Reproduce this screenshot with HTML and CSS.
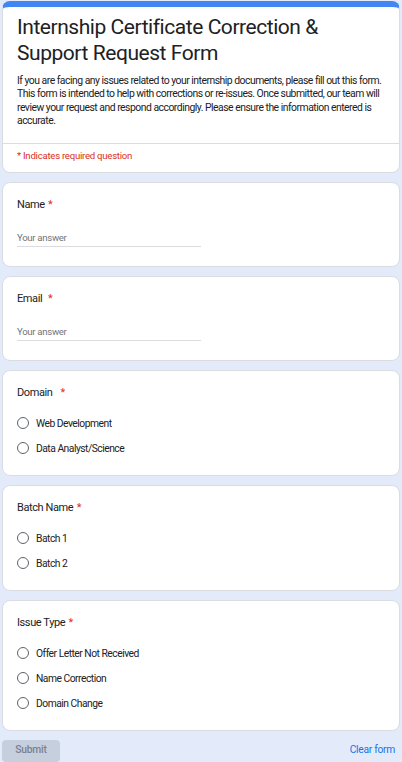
FILE: index.html
```html
<!DOCTYPE html>
<html>
<head>
<meta charset="utf-8">
<link rel="stylesheet" href="styles.css">
</head>
<body>
<div class="page">
  <div class="card header">
    <h1 class="title">Internship Certificate Correction &amp; Support Request Form</h1>
    <p class="desc">If you are facing any issues related to your internship documents, please fill out this form. This form is intended to help with corrections or re-issues. Once submitted, our team will review your request and respond accordingly. Please ensure the information entered is accurate.</p>
    <div class="req-row">* Indicates required question</div>
  </div>

  <div class="card q text-q">
    <div class="label">Name <span class="star">*</span></div>
    <div class="input">Your answer</div>
  </div>

  <div class="card q text-q">
    <div class="label">Email&nbsp; <span class="star">*</span></div>
    <div class="input">Your answer</div>
  </div>

  <div class="card q">
    <div class="label">Domain&nbsp;&nbsp; <span class="star">*</span></div>
    <div class="options">
      <div class="opt"><span class="radio"></span>Web Development</div>
      <div class="opt"><span class="radio"></span>Data Analyst/Science</div>
    </div>
  </div>

  <div class="card q">
    <div class="label">Batch Name <span class="star">*</span></div>
    <div class="options">
      <div class="opt"><span class="radio"></span>Batch 1</div>
      <div class="opt"><span class="radio"></span>Batch 2</div>
    </div>
  </div>

  <div class="card q">
    <div class="label">Issue Type <span class="star">*</span></div>
    <div class="options">
      <div class="opt"><span class="radio"></span>Offer Letter Not Received</div>
      <div class="opt"><span class="radio"></span>Name Correction</div>
      <div class="opt"><span class="radio"></span>Domain Change</div>
    </div>
  </div>

  <div class="actions">
    <div class="submit">Submit</div>
    <div class="clear">Clear form</div>
  </div>
</div>
</body>
</html>
```

FILE: styles.css
```css
html, body {
  margin: 0;
  padding: 0;
  background: #e3ebfa;
}
body {
  font-family: Roboto, "Liberation Sans", sans-serif;
  color: #202124;
}
.page {
  padding: 1px 2px 0 2px;
  display: flex;
  flex-direction: column;
  gap: 9px;
}
.card {
  background: #fff;
  border: 1px solid #dadce0;
  border-radius: 8px;
}
.header {
  border-top: 6px solid #4285f4;
  overflow: hidden;
}
.title {
  margin: 0;
  padding: 7px 14px 0 14px;
  font-size: 21px;
  line-height: 26px;
  font-weight: 400;
  letter-spacing: -0.45px;
}
.desc {
  margin: 0;
  padding: 8px 14px 16px 14px;
  font-size: 10.4px;
  line-height: 13.3px;
  letter-spacing: -0.5px;
}
.req-row {
  border-top: 1px solid #dadce0;
  padding: 5px 14px 9px 14px;
  font-size: 9.6px;
  line-height: 14px;
  letter-spacing: -0.25px;
  color: #d93025;
}
.q {
  padding: 14px 14px 17px 14px;
}
.text-q {
  padding-bottom: 19px;
}
.label {
  font-size: 11px;
  line-height: 16px;
  font-weight: 400;
  letter-spacing: -0.4px;
  white-space: pre;
}
.star {
  color: #d93025;
  margin-left: 1px;
}
.input {
  margin-top: 17px;
  width: 184px;
  font-size: 9.6px;
  line-height: 16px;
  letter-spacing: -0.3px;
  color: #70757a;
  border-bottom: 1px solid #dadce0;
}
.options {
  margin-top: 12px;
  display: flex;
  flex-direction: column;
  gap: 5px;
}
.opt {
  display: flex;
  align-items: center;
  height: 20px;
  font-size: 10.3px;
  letter-spacing: -0.5px;
}
.radio {
  width: 10px;
  height: 10px;
  border: 1.4px solid #5f6368;
  border-radius: 50%;
  margin-right: 7px;
  flex: none;
}
.actions {
  display: flex;
  justify-content: space-between;
  align-items: flex-start;
}
.submit {
  width: 58px;
  height: 22px;
  line-height: 20px;
  border-radius: 4px;
  background: #c6cfdd;
  color: #7b8190;
  font-size: 10.3px;
  font-weight: 500;
  letter-spacing: -0.2px;
  text-align: center;
}
.clear {
  color: #1a73e8;
  font-size: 10.3px;
  font-weight: 400;
  letter-spacing: -0.3px;
  line-height: 20px;
  padding-right: 5px;
}
```
